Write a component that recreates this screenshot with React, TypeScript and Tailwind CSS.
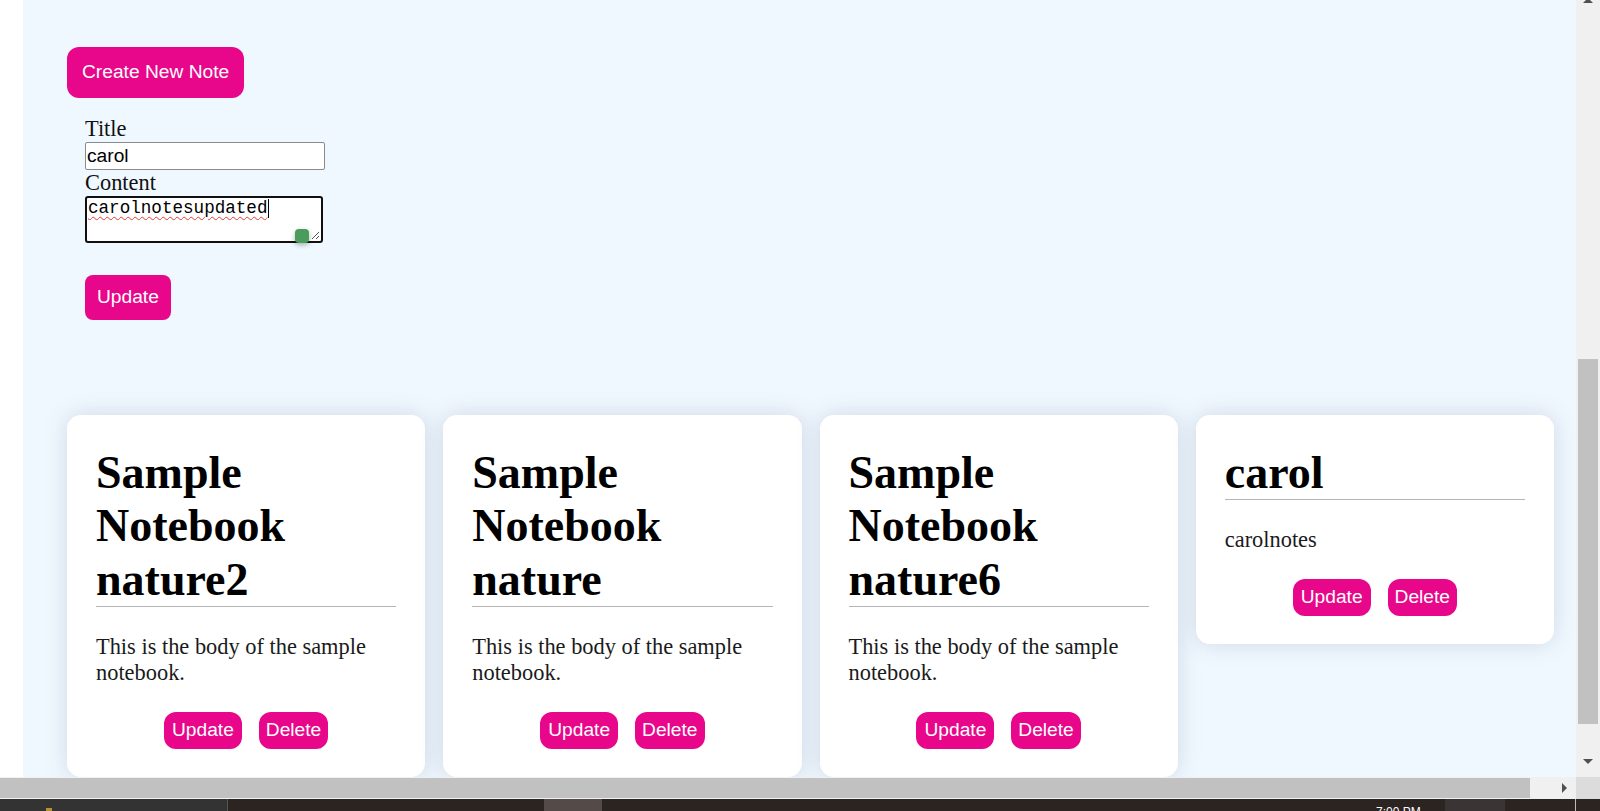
import React from "react";

const notes = [
  { title: "Sample Notebook nature2", body: "This is the body of the sample notebook." },
  { title: "Sample Notebook nature", body: "This is the body of the sample notebook." },
  { title: "Sample Notebook nature6", body: "This is the body of the sample notebook." },
  { title: "carol", body: "carolnotes" },
];

function NoteCard({ title, body }: { title: string; body: string }) {
  return (
    <div className="rounded-[14px] bg-white px-[29px] pt-[31px] pb-[28px] shadow-[0_0_24px_rgba(60,80,110,0.18)]">
      <h2 className="border-b border-[#b5b5b5] font-['Liberation_Serif',serif] text-[46px] font-bold leading-[53.5px] text-black">
        {title}
      </h2>
      <p className="mt-[27px] font-['Liberation_Serif',serif] text-[22.4px] leading-[1.15] text-[#1a1a1a]">
        {body}
      </p>
      <div className="mt-[26px] flex justify-center gap-[17px]">
        <button className="h-[37px] rounded-[12px] bg-[#e8078b] px-[8px] font-['Liberation_Sans',sans-serif] text-[19.2px] text-white">
          Update
        </button>
        <button className="h-[37px] rounded-[12px] bg-[#e8078b] px-[7px] font-['Liberation_Sans',sans-serif] text-[19.2px] text-white">
          Delete
        </button>
      </div>
    </div>
  );
}

export default function App() {
  return (
    <div className="flex h-[811px] w-[1600px] flex-col overflow-hidden bg-white">
      <div className="flex h-[777px]">
        <div className="w-[23px] bg-white" />

        {/* page */}
        <main className="flex-1 overflow-hidden bg-[#f0f8ff] pl-[44px] pr-[22px] pt-[47px]">
          <button className="h-[51px] rounded-[12px] bg-[#e8078b] px-[15px] font-['Liberation_Sans',sans-serif] text-[19.2px] text-white">
            Create New Note
          </button>

          <form className="ml-[18px] mt-[18px] flex flex-col items-start font-['Liberation_Serif',serif] text-[22.4px] leading-[1.15] text-[#111]">
            <label>Title</label>
            <input
              defaultValue="carol"
              className="h-[28px] w-[240px] rounded-[2px] border border-[#8a8a8a] bg-white px-[1px] font-['Liberation_Sans',sans-serif] text-[19.2px] text-black outline-none"
            />
            <label>Content</label>
            <div className="relative h-[47px] w-[238px] rounded-[3px] border-2 border-[#101010] bg-white">
              <div className="flex items-start px-[1px] font-['Liberation_Mono',monospace] text-[17.6px] leading-[20px] text-black">
                <span className="underline decoration-[#e53935] decoration-wavy decoration-1 underline-offset-[3px]">
                  carolnotesupdated
                </span>
                <span className="mt-[1px] h-[19px] w-px bg-black" />
              </div>
              {/* grammar checker badge */}
              <div className="absolute bottom-[-2px] right-[12px] h-[14px] w-[14px] rounded-[4px] bg-[#4a9c5d] shadow-[0_2px_5px_rgba(0,0,0,0.3)]" />
              {/* resize grip */}
              <svg className="absolute bottom-[1px] right-[1px]" width="10" height="10" viewBox="0 0 10 10">
                <path d="M9 2 L2 9 M9 6 L6 9" stroke="#555" strokeWidth="1" fill="none" />
              </svg>
            </div>
            <button
              type="button"
              className="mt-[32px] h-[45px] rounded-[8px] bg-[#e8078b] px-[12px] font-['Liberation_Sans',sans-serif] text-[19.2px] text-white"
            >
              Update
            </button>
          </form>

          <div className="mt-[95px] grid grid-cols-4 items-start gap-[18px]">
            {notes.map((n) => (
              <NoteCard key={n.title} title={n.title} body={n.body} />
            ))}
          </div>
        </main>

        {/* vertical scrollbar */}
        <div className="flex w-[24px] flex-col bg-[#f0f0f0]">
          <div className="flex h-[5px] items-start justify-center overflow-hidden">
            <div className="-mt-[2px] h-0 w-0 border-x-[5px] border-b-[5px] border-x-transparent border-b-[#505050]" />
          </div>
          <div className="flex-1 px-[2px] pt-[354px]">
            <div className="h-[365px] bg-[#c1c1c1]" />
          </div>
          <div className="flex h-[24px] items-start justify-center pt-[6px]">
            <div className="h-0 w-0 border-x-[5px] border-t-[5px] border-x-transparent border-t-[#505050]" />
          </div>
        </div>
      </div>

      {/* horizontal scrollbar */}
      <div className="flex h-[22px] bg-[#f0f0f0]">
        <div className="my-[1px] w-[1530px] bg-[#c1c1c1]" />
        <div className="flex flex-1 items-center justify-end pr-[9px]">
          <div className="h-0 w-0 border-y-[5px] border-l-[5px] border-y-transparent border-l-[#505050]" />
        </div>
        <div className="w-[24px] bg-[#dcdcdc]" />
      </div>

      {/* taskbar */}
      <div className="flex h-[12px] overflow-hidden bg-[#2b2421]">
        <div className="flex w-[228px] items-end justify-center border-r border-[#555] bg-[#333]">
          <div className="ml-[-130px] h-[3px] w-[6px] bg-[#b8912e]" />
        </div>
        <div className="w-[316px]" />
        <div className="w-[58px] bg-[#544b48]" />
        <div className="w-[774px]" />
        <div className="pt-[7px] font-['Liberation_Sans',sans-serif] text-[12px] leading-none text-white">7:00 PM</div>
        <div className="ml-[24px] w-[60px] bg-[#3a3434]" />
        <div className="w-[70px]" />
        <div className="w-px bg-[#bbb]" />
      </div>
    </div>
  );
}
